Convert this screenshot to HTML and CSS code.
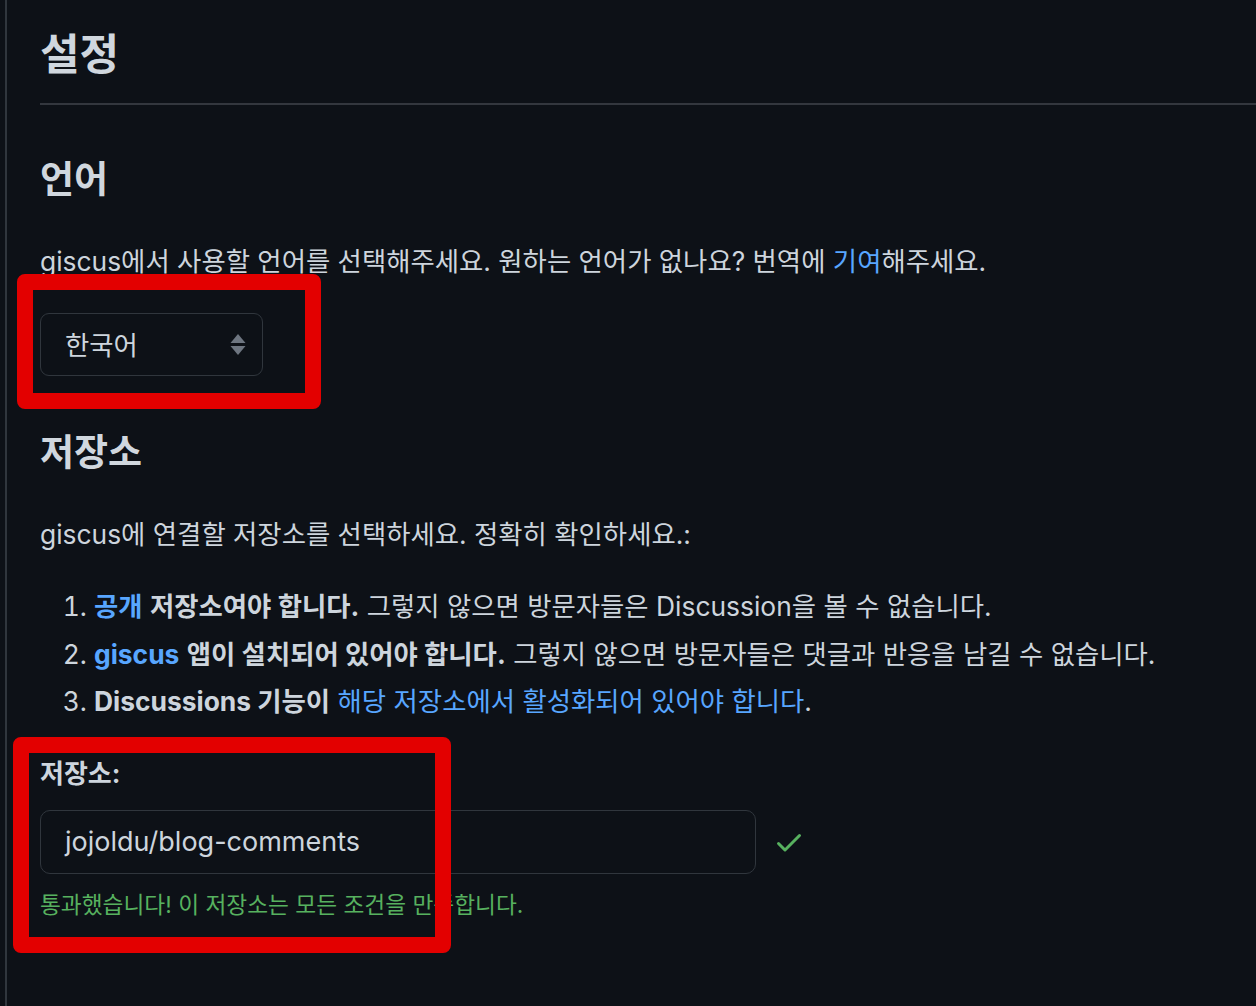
FILE: index.html
```html
<!DOCTYPE html>
<html lang="ko">
<head>
<meta charset="utf-8">
<title>giscus 설정</title>
<link rel="stylesheet" href="styles.css">
</head>
<body>
<main class="page">
  <h1 class="title">설정</h1>
  <h2 class="section">언어</h2>
  <p class="text">giscus에서 사용할 언어를 선택해주세요. 원하는 언어가 없나요? 번역에 <a class="link" href="#">기여</a>해주세요.</p>
  <div class="select">
    <span class="select-value">한국어</span>
    <svg class="select-arrows" width="16" height="22" viewBox="0 0 16 22" aria-hidden="true">
      <path d="M8 0 L15.5 9 L0.5 9 Z" fill="#6e7681"/>
      <path d="M0.5 12 L15.5 12 L8 21 Z" fill="#6e7681"/>
    </svg>
  </div>
  <h2 class="section section-repo">저장소</h2>
  <p class="text">giscus에 연결할 저장소를 선택하세요. 정확히 확인하세요.:</p>
  <ol class="reqs">
    <li><a class="link strong" href="#">공개</a> <strong>저장소여야 합니다.</strong> 그렇지 않으면 방문자들은 Discussion을 볼 수 없습니다.</li>
    <li><a class="link strong" href="#">giscus</a> <strong>앱이 설치되어 있어야 합니다.</strong> 그렇지 않으면 방문자들은 댓글과 반응을 남길 수 없습니다.</li>
    <li><strong>Discussions 기능이</strong> <a class="link" href="#">해당 저장소에서 활성화되어 있어야 합니다</a>.</li>
  </ol>
  <label class="label" for="repo">저장소:</label>
  <div class="field-row">
    <div class="input" id="repo">jojoldu/blog-comments</div>
    <svg class="check" width="32" height="32" viewBox="0 0 16 16" aria-hidden="true">
      <path fill="#57b15f" d="M13.78 4.220a.75.75 0 0 1 0 1.06l-7.25 7.25a.75.75 0 0 1-1.06 0L2.22 9.28a.751.751 0 0 1 .018-1.042.751.751 0 0 1 1.042-.018L6 10.94l6.72-6.720a.75.75 0 0 1 1.06 0Z"/>
    </svg>
  </div>
  <p class="success">통과했습니다! 이 저장소는 모든 조건을 만족합니다.</p>
</main>
<div class="mark mark-lang"></div>
<div class="mark mark-repo"></div>
</body>
</html>
```
FILE: styles.css
```css
html, body {
  margin: 0;
  padding: 0;
  background: #0d1117;
}
body {
  position: relative;
  min-height: 1006px;
  color: #cdd5dd;
  font-family: Inter, "Noto Sans CJK KR", sans-serif;
  font-size: 26.4px;
  overflow: hidden;
}
.page {
  display: flex;
  flex-direction: column;
  align-items: flex-start;
  margin-left: 5px;
  border-left: 2px solid #30363d;
  padding-left: 33px;
  min-height: 1006px;
  box-sizing: border-box;
}
.title {
  align-self: stretch;
  margin: 24px 0 0 0;
  font-size: 43px;
  line-height: 60px;
  font-weight: 700;
  color: #d0d7de;
  padding-bottom: 19px;
  border-bottom: 2px solid #33373e;
}
.section {
  margin: 48px 0 0 0;
  font-size: 37px;
  line-height: 54px;
  font-weight: 700;
  color: #d0d7de;
}
.section-repo {
  margin-top: 50px;
}
.text {
  margin: 36px 0 0 0;
  line-height: 36px;
}
.link {
  color: #58a6ff;
  text-decoration: none;
}
.strong {
  font-weight: 700;
}
strong {
  font-weight: 700;
}
.select {
  margin-top: 34px;
  width: 223px;
  height: 63px;
  box-sizing: border-box;
  border: 1px solid #30363d;
  border-radius: 9px;
  display: flex;
  align-items: center;
  justify-content: space-between;
  padding: 0 16px 0 24px;
}
.select-value {
  line-height: 36px;
}
.reqs {
  margin: 36px 0 0 0;
  padding-left: 54px;
  line-height: 36px;
}
.reqs li + li {
  margin-top: 11.5px;
}
.label {
  margin-top: 37px;
  font-weight: 700;
  font-size: 26px;
  line-height: 36px;
}
.field-row {
  margin-top: 18px;
  display: flex;
  align-items: center;
  gap: 17px;
}
.input {
  width: 716px;
  height: 64px;
  box-sizing: border-box;
  border: 1px solid #30363d;
  border-radius: 10px;
  padding: 0 24px;
  display: flex;
  align-items: center;
  font-size: 27px;
  line-height: 36px;
}
.check {
  display: block;
}
.success {
  margin: 13px 0 0 0;
  font-size: 22.7px;
  line-height: 36px;
  color: #57b15f;
}
.mark {
  position: absolute;
  border: 16px solid #e30000;
  border-radius: 8px;
  box-sizing: border-box;
}
.mark-lang {
  left: 17px;
  top: 274px;
  width: 304px;
  height: 135px;
}
.mark-repo {
  left: 13px;
  top: 737px;
  width: 438px;
  height: 216px;
}
```
